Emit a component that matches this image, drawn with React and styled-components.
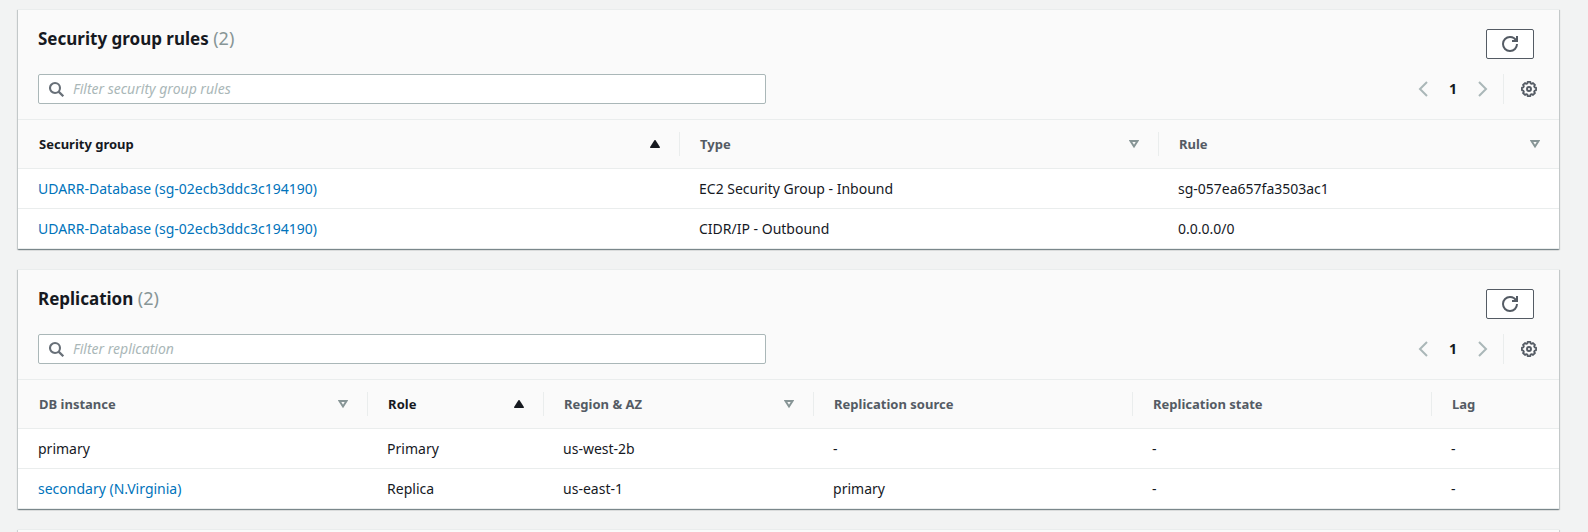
import React from "react";
import styled, { createGlobalStyle, css } from "styled-components";

const GlobalStyle = createGlobalStyle`
  *, *::before, *::after { box-sizing: border-box; }
  body {
    margin: 0;
    background: #f2f3f3;
    color: #16191f;
    font-family: "Noto Sans", "Open Sans", "Liberation Sans", sans-serif;
    font-size: 14px;
    line-height: 22px;
  }
`;

const Page = styled.main`
  display: flex;
  flex-direction: column;
  gap: 20px;
  min-height: 100vh;
  padding: 9px 29px 0 18px;
`;

const Card = styled.section`
  border-top: 1px solid #eaeded;
  background: #fff;
  box-shadow:
    0 1px 1px 0 rgba(0, 28, 36, 0.3),
    1px 1px 1px 0 rgba(0, 28, 36, 0.15),
    -1px 1px 1px 0 rgba(0, 28, 36, 0.15);
`;

const NextCard = styled(Card)`
  flex: 1;
  background: #fafafa;
`;

const CardHeader = styled.header`
  display: flex;
  flex-direction: column;
  gap: 15px;
  padding: 19px 20px 15px;
  background: #fafafa;
`;

const TitleRow = styled.div`
  display: flex;
  align-items: flex-start;
  justify-content: space-between;
  height: 30px;
  padding-right: 5px;
`;

const Title = styled.h2`
  margin: 0;
  font-size: 17px;
  font-weight: 700;
  line-height: 18px;
`;

const Count = styled.span`
  color: #879596;
  font-size: 18px;
  font-weight: 400;
`;

const RefreshButton = styled.button`
  display: flex;
  align-items: center;
  justify-content: center;
  width: 48px;
  height: 30px;
  padding: 0;
  border: 1px solid #545b64;
  border-radius: 2px;
  background: #fff;
  color: #545b64;
  cursor: pointer;
`;

const ToolRow = styled.div`
  display: flex;
  align-items: center;
  justify-content: space-between;
`;

const SearchBox = styled.label`
  display: flex;
  flex: 1;
  align-items: center;
  gap: 8px;
  max-width: 728px;
  height: 30px;
  padding: 0 10px;
  border: 1px solid #aab7b8;
  border-radius: 2px;
  background: #fff;
  color: #687078;
`;

const SearchInput = styled.input`
  flex: 1;
  min-width: 0;
  padding: 0;
  border: 0;
  outline: 0;
  background: transparent;
  color: #16191f;
  font: inherit;

  &::placeholder {
    color: #aab7b8;
    font-style: italic;
    opacity: 1;
  }
`;

const Tools = styled.div`
  display: flex;
  align-items: center;
`;

const Pager = styled.nav`
  display: flex;
  align-items: center;
  gap: 11px;
  height: 30px;
  padding-right: 12px;
  border-right: 1px solid #eaeded;
`;

const IconButton = styled.button`
  display: flex;
  align-items: center;
  justify-content: center;
  width: 16px;
  height: 30px;
  padding: 0;
  border: 0;
  background: transparent;
  color: ${(p) => (p.$muted ? "#aab7b8" : "#545b64")};
  cursor: pointer;
`;

const PageButton = styled(IconButton)`
  width: 22px;
  color: #16191f;
  font: inherit;
  font-weight: 700;
`;

const SettingsButton = styled(IconButton)`
  margin: 0 2px 0 17px;
`;

const Table = styled.table`
  width: 100%;
  table-layout: fixed;
  border-collapse: collapse;
`;

const HeadRow = styled.tr`
  height: 49px;
  border-top: 1px solid #eaeded;
  background: #fafafa;
`;

const headInner = css`
  display: flex;
  align-items: center;
  justify-content: space-between;
  width: 100%;
  height: 24px;
  padding: 0 19px 0 20px;
  border: 0;
  border-right: 1px solid #eaeded;
  background: transparent;
  color: inherit;
  font: inherit;
  white-space: nowrap;
`;

const HeadLabel = styled.div`
  ${headInner}
`;

const SortButton = styled.button`
  ${headInner}
  cursor: pointer;
`;

const HeadCell = styled.th`
  padding: 0;
  color: ${(p) => (p.$active ? "#16191f" : "#545b64")};
  font-size: 13px;
  font-weight: 700;
  text-align: left;

  &:first-child > * {
    padding-left: 21px;
  }

  &:last-child > * {
    border-right: 0;
  }
`;

const BodyRow = styled.tr`
  height: 40px;
  border-top: 1px solid #eaeded;

  &:last-child {
    border-bottom: 1px solid #eaeded;
  }
`;

const Cell = styled.td`
  padding: 0 19px;
  line-height: 22px;
  overflow: hidden;
  text-overflow: ellipsis;
  white-space: nowrap;

  &:first-child {
    padding-left: 20px;
  }
`;

const Link = styled.a`
  color: #0073bb;
  text-decoration: none;
`;

const Svg = ({ size = 16, children, ...rest }) => (
  <svg
    width={size}
    height={size}
    viewBox="0 0 16 16"
    fill="none"
    stroke="currentColor"
    strokeWidth="2"
    aria-hidden="true"
    {...rest}
  >
    {children}
  </svg>
);

const SearchIcon = () => (
  <Svg>
    <circle cx="6" cy="7" r="5" strokeWidth="2.1" />
    <path d="M9.6 10.6 14.3 15.2" strokeWidth="2.3" />
  </Svg>
);

const RefreshIcon = () => (
  <Svg>
    <path d="M10 5h5V0" />
    <path d="M15 8a6.957 6.957 0 0 1-7 7 6.957 6.957 0 0 1-7-7 6.957 6.957 0 0 1 7-7 6.87 6.87 0 0 1 6.3 4" />
  </Svg>
);

const ChevronLeft = () => (
  <Svg>
    <path d="M12 1 5 8l7 7" />
  </Svg>
);

const ChevronRight = () => (
  <Svg>
    <path d="m4 1 7 7-7 7" />
  </Svg>
);

const gearPoints = Array.from({ length: 8 }, (_, tooth) =>
  [
    [-15, 5.9],
    [-11, 7.2],
    [11, 7.2],
    [15, 5.9],
  ].map(([offset, radius]) => {
    const angle = ((tooth * 45 + offset) * Math.PI) / 180;
    return `${(8 + radius * Math.sin(angle)).toFixed(2)},${(8 - radius * Math.cos(angle)).toFixed(2)}`;
  })
)
  .flat()
  .join(" ");

const GearIcon = () => (
  <Svg strokeLinejoin="round">
    <polygon points={gearPoints} strokeWidth="1.8" />
    <circle cx="8" cy="8" r="2" strokeWidth="1.9" />
  </Svg>
);

const SortAscending = () => (
  <Svg size={10} viewBox="0 0 10 10" stroke="none" fill="currentColor">
    <path d="M4.4 1.3Q5 .5 5.6 1.3L9.9 8Q10.3 9 9.3 9H.7Q-.3 9 .1 8Z" />
  </Svg>
);

const SortAvailable = () => (
  <Svg size={10} viewBox="0 0 10 10" stroke="#879596">
    <path d="M1.5 2h7L5 7.5Z" />
  </Svg>
);

function DataCard({ title, placeholder, columns, rows }) {
  return (
    <Card aria-label={title}>
      <CardHeader>
        <TitleRow>
          <Title>
            {title} <Count>({rows.length})</Count>
          </Title>
          <RefreshButton type="button" aria-label={`Refresh ${title}`}>
            <RefreshIcon />
          </RefreshButton>
        </TitleRow>
        <ToolRow>
          <SearchBox>
            <SearchIcon />
            <SearchInput type="text" placeholder={placeholder} aria-label={placeholder} />
          </SearchBox>
          <Tools>
            <Pager aria-label={`${title} pages`}>
              <IconButton type="button" $muted aria-label="Previous page">
                <ChevronLeft />
              </IconButton>
              <PageButton type="button" aria-current="page">1</PageButton>
              <IconButton type="button" $muted aria-label="Next page">
                <ChevronRight />
              </IconButton>
            </Pager>
            <SettingsButton type="button" aria-label="Preferences">
              <GearIcon />
            </SettingsButton>
          </Tools>
        </ToolRow>
      </CardHeader>
      <Table>
        <colgroup>
          {columns.map((c) => (
            <col key={c.label} style={{ width: c.width }} />
          ))}
        </colgroup>
        <thead>
          <HeadRow>
            {columns.map((c) => (
              <HeadCell
                key={c.label}
                scope="col"
                $active={c.sort === "ascending"}
                aria-sort={c.sort === "ascending" ? "ascending" : undefined}
              >
                {c.sort ? (
                  <SortButton type="button">
                    {c.label}
                    {c.sort === "ascending" ? <SortAscending /> : <SortAvailable />}
                  </SortButton>
                ) : (
                  <HeadLabel>{c.label}</HeadLabel>
                )}
              </HeadCell>
            ))}
          </HeadRow>
        </thead>
        <tbody>
          {rows.map((row, r) => (
            <BodyRow key={r}>
              {row.map((value, i) => (
                <Cell key={i}>{value}</Cell>
              ))}
            </BodyRow>
          ))}
        </tbody>
      </Table>
    </Card>
  );
}

const securityColumns = [
  { label: "Security group", width: "42.96%", sort: "ascending" },
  { label: "Type", width: "31.08%", sort: "available" },
  { label: "Rule", width: "25.96%", sort: "available" },
];

const securityRows = [
  [
    <Link href="#sg-inbound">UDARR-Database (sg-02ecb3ddc3c194190)</Link>,
    "EC2 Security Group - Inbound",
    "sg-057ea657fa3503ac1",
  ],
  [
    <Link href="#sg-outbound">UDARR-Database (sg-02ecb3ddc3c194190)</Link>,
    "CIDR/IP - Outbound",
    "0.0.0.0/0",
  ],
];

const replicationColumns = [
  { label: "DB instance", width: "22.72%", sort: "available" },
  { label: "Role", width: "11.42%", sort: "ascending" },
  { label: "Region & AZ", width: "17.52%", sort: "available" },
  { label: "Replication source", width: "20.7%" },
  { label: "Replication state", width: "19.4%" },
  { label: "Lag", width: "8.24%" },
];

const replicationRows = [
  ["primary", "Primary", "us-west-2b", "-", "-", "-"],
  [<Link href="#secondary">secondary (N.Virginia)</Link>, "Replica", "us-east-1", "primary", "-", "-"],
];

export default function App() {
  return (
    <>
      <GlobalStyle />
      <Page>
        <DataCard
          title="Security group rules"
          placeholder="Filter security group rules"
          columns={securityColumns}
          rows={securityRows}
        />
        <DataCard
          title="Replication"
          placeholder="Filter replication"
          columns={replicationColumns}
          rows={replicationRows}
        />
        <NextCard />
      </Page>
    </>
  );
}
